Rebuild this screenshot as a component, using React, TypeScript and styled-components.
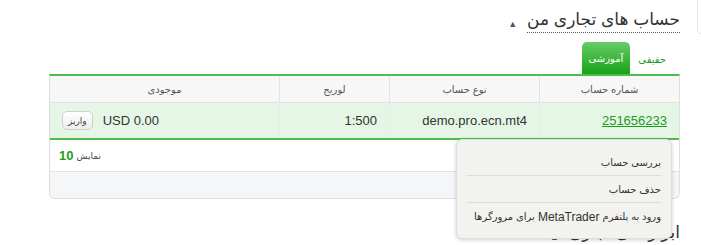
import styled, { createGlobalStyle } from "styled-components";

const GlobalStyle = createGlobalStyle`
  html, body {
    margin: 0;
    padding: 0;
    background: #ffffff;
    font-family: "Liberation Sans", "DejaVu Sans", sans-serif;
    color: #333;
  }
  * { box-sizing: border-box; }
`;

const Page = styled.div`
  direction: rtl;
  width: 701px;
  height: 245px;
  overflow: hidden;
  padding: 0 21px 0 49px;
  position: relative;
`;

const Corner = styled.div`
  position: absolute;
  top: -4px;
  right: -6px;
  width: 10px;
  height: 38px;
  border: 1px solid #e4e4e4;
  border-radius: 4px;
`;

const Section = styled.section`
  position: relative;
`;

const Heading = styled.h2`
  margin: 0;
  padding-top: 9px;
  height: 42px;
  display: flex;
  align-items: flex-start;
  gap: 10px;
  font-size: 17px;
  font-weight: normal;
  color: #333;
`;

const HeadingText = styled.span`
  border-bottom: 1px dotted #555;
  line-height: 22px;
  padding-bottom: 1px;
`;

const Caret = styled.span`
  font-size: 9px;
  color: #555;
  margin-top: 10px;
`;

const Tabs = styled.div`
  display: flex;
  align-items: flex-end;
  height: 32px;
  padding-right: 6px;
`;

const Tab = styled.div<{ $active?: boolean }>`
  height: ${(p) => (p.$active ? "32px" : "30px")};
  padding: 0 ${(p) => (p.$active ? "7px" : "8px")};
  display: flex;
  align-items: center;
  font-size: 10px;
  border-radius: 5px 5px 0 0;
  color: ${(p) => (p.$active ? "#fff" : "#1e9a1e")};
  background: ${(p) =>
    p.$active ? "linear-gradient(#67cc67, #17a417)" : "transparent"};
`;

const Card = styled.div`
  border: 1px solid #dedede;
  border-top: 2px solid #4cbd4c;
  border-radius: 0 0 6px 6px;
  position: relative;
`;

const Row = styled.div<{ $bg: string; $h: number }>`
  display: grid;
  grid-template-columns: 140px 150px 110px 1fr;
  height: ${(p) => p.$h}px;
  background: ${(p) => p.$bg};
  border-bottom: 1px solid #e3e3e3;
`;

const HeadCell = styled.div`
  display: flex;
  align-items: center;
  justify-content: center;
  font-size: 10px;
  color: #555;
  border-left: 1px solid #e3e3e3;
  &:last-child { border-left: none; }
`;

const Cell = styled.div<{ $end?: boolean }>`
  display: flex;
  align-items: center;
  gap: 10px;
  padding: 0 12px;
  font-size: 13px;
  color: #333;
  direction: ${(p) => (p.$end ? "ltr" : "rtl")};
  border-left: 1px solid #e6efe6;
  &:last-child { border-left: none; }
`;

const AccountLink = styled.a`
  color: #1e9a1e;
  text-decoration: underline;
  font-size: 13px;
`;

const DepositButton = styled.button`
  font-family: "DejaVu Sans", sans-serif;
  font-size: 9px;
  color: #444;
  background: linear-gradient(#ffffff, #eeeeee);
  border: 1px solid #cfcfcf;
  border-radius: 5px;
  height: 19px;
  padding: 0 5px;
`;

const DataRow = styled(Row)`
  border-bottom: 2px solid #4cbd4c;
`;

const Footer = styled.div`
  height: 32px;
  display: flex;
  align-items: center;
  justify-content: flex-end;
  padding: 0 9px;
  border-bottom: 1px solid #e3e3e3;
  font-size: 9px;
  color: #444;
  gap: 3px;
`;

const Count = styled.b`
  color: #22a022;
  font-size: 13px;
`;

const Pager = styled.div`
  height: 26px;
  background: #f5f6f8;
  border-radius: 0 0 6px 6px;
`;

const Menu = styled.ul`
  position: absolute;
  top: 63px;
  right: 7px;
  width: 216px;
  margin: 0;
  padding: 9px 10px 8px 10px;
  list-style: none;
  background: #f2f2ef;
  border: 1px solid #dddddd;
  border-radius: 6px;
  box-shadow: 0 1px 4px rgba(0, 0, 0, 0.18);
  z-index: 5;
`;

const MenuItem = styled.li`
  height: 27px;
  display: flex;
  align-items: center;
  font-size: 10px;
  color: #333;
  border-bottom: 1px solid #dcdcd8;
  &:last-child { border-bottom: none; }
`;

const Latin = styled.span`
  font-family: "Liberation Sans", sans-serif;
  font-size: 12px;
  margin: 0 3px;
`;

const SecondHeading = styled(Heading)`
  padding-top: 23px;
`;

export default function App() {
  return (
    <>
      <GlobalStyle />
      <Page>
        <Corner />
        <Section>
          <Heading>
            <HeadingText>حساب های تجاری من</HeadingText>
            <Caret>▲</Caret>
          </Heading>
          <Tabs>
            <Tab>حقیقی</Tab>
            <Tab $active>آموزشی</Tab>
          </Tabs>
          <Card>
            <Row $bg="#f7f7f7" $h={27}>
              <HeadCell>شماره حساب</HeadCell>
              <HeadCell>نوع حساب</HeadCell>
              <HeadCell>لوریج</HeadCell>
              <HeadCell>موجودی</HeadCell>
            </Row>
            <DataRow $bg="#e6f6e6" $h={37}>
              <Cell>
                <AccountLink href="#">251656233</AccountLink>
              </Cell>
              <Cell>demo.pro.ecn.mt4</Cell>
              <Cell>1:500</Cell>
              <Cell $end>
                <DepositButton>واریز</DepositButton>
                <span>USD 0.00</span>
              </Cell>
            </DataRow>
            <Footer>
              <span>نمایش</span>
              <Count>10</Count>
            </Footer>
            <Pager />
            <Menu>
              <MenuItem>بررسی حساب</MenuItem>
              <MenuItem>حذف حساب</MenuItem>
              <MenuItem>
                ورود به پلتفرم<Latin>MetaTrader</Latin>برای مرورگرها
              </MenuItem>
            </Menu>
          </Card>
        </Section>
        <SecondHeading>
          <HeadingText>ابزار های تجاری</HeadingText>
          <Caret>▲</Caret>
        </SecondHeading>
      </Page>
    </>
  );
}
